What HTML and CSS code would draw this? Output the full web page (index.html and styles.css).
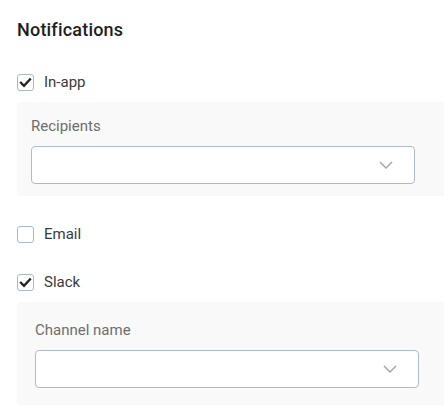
FILE: index.html
```html
<!DOCTYPE html>
<html>
<head>
<meta charset="utf-8">
<link rel="stylesheet" href="styles.css">
</head>
<body>
<div class="page">
  <h2 class="title">Notifications</h2>

  <label class="check-row row-inapp">
    <span class="box checked"><svg viewBox="0 0 17 17" width="17" height="17"><path d="M4 8.8 L7 11.8 L13 5.3" fill="none" stroke="#222" stroke-width="2.3" stroke-linecap="square"/></svg></span>
    <span class="check-label">In-app</span>
  </label>

  <div class="panel panel-a">
    <div class="field-label">Recipients</div>
    <div class="select">
      <svg class="chev" viewBox="0 0 14 8" width="14" height="8"><path d="M1 1 L7 7 L13 1" fill="none" stroke="#a8a8a8" stroke-width="1.5"/></svg>
    </div>
  </div>

  <label class="check-row row-email">
    <span class="box"></span>
    <span class="check-label">Email</span>
  </label>

  <label class="check-row row-slack">
    <span class="box checked"><svg viewBox="0 0 17 17" width="17" height="17"><path d="M4 8.8 L7 11.8 L13 5.3" fill="none" stroke="#222" stroke-width="2.3" stroke-linecap="square"/></svg></span>
    <span class="check-label">Slack</span>
  </label>

  <div class="panel panel-b">
    <div class="field-label">Channel name</div>
    <div class="select">
      <svg class="chev" viewBox="0 0 14 8" width="14" height="8"><path d="M1 1 L7 7 L13 1" fill="none" stroke="#a8a8a8" stroke-width="1.5"/></svg>
    </div>
  </div>
</div>
</body>
</html>
```

FILE: styles.css
```css
* { box-sizing: border-box; }
html, body { margin: 0; padding: 0; background: #fff; }
body {
  font-family: Roboto, "Liberation Sans", Arial, sans-serif;
  width: 444px;
  height: 407px;
  overflow: hidden;
}
.page {
  padding: 18px 0 0 17px;
  display: flex;
  flex-direction: column;
}
.title {
  margin: 0;
  font-size: 18px;
  line-height: 24px;
  font-weight: 500;
  letter-spacing: 0.2px;
  color: #1e1e1e;
}
.check-row {
  display: flex;
  align-items: center;
  height: 24px;
  gap: 10px;
}
.row-inapp { margin-top: 28px; }
.row-email { margin-top: 26px; }
.row-slack { margin-top: 24px; }
.box {
  width: 17px;
  height: 17px;
  border: 1px solid #a9b9c7;
  border-radius: 3px;
  background: #fff;
  position: relative;
  flex: none;
}
.box svg {
  position: absolute;
  left: -1px;
  top: -1px;
}
.check-label {
  font-size: 15px;
  line-height: 18px;
  color: #3a3a3a;
}
.panel {
  background: #f9f9f9;
  border-radius: 4px 0 0 4px;
  margin-top: 8px;
}
.panel-a { padding: 14px 0 12px 14px; }
.panel-b { padding: 18px 0 17px 18px; }
.field-label {
  font-size: 15px;
  line-height: 20px;
  color: #6e6e6e;
  margin-bottom: 10px;
}
.select {
  width: 384px;
  height: 38px;
  background: #fff;
  border: 1px solid #abbdcb;
  border-radius: 4px;
  display: flex;
  align-items: center;
  justify-content: flex-end;
  padding-right: 21px;
}
.chev { display: block; }
```
